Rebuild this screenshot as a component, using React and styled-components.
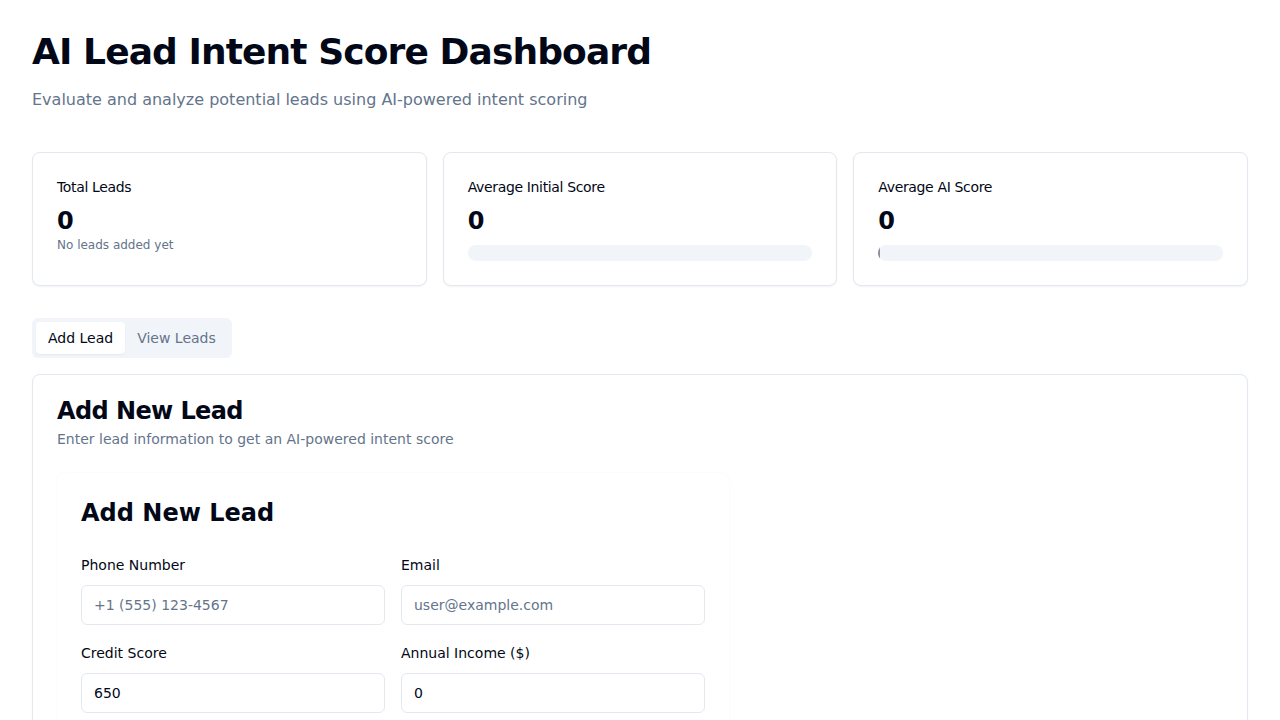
import React, { useState } from "react";
import styled, { createGlobalStyle } from "styled-components";

const GlobalStyle = createGlobalStyle`
  body {
    margin: 0;
    background: #ffffff;
    color: #020817;
    font-family: "DejaVu Sans", "Noto Sans", sans-serif;
  }
  * { box-sizing: border-box; }
`;

const Page = styled.div`
  padding: 32px;
`;

const Title = styled.h1`
  margin: 0;
  font-size: 36px;
  line-height: 40px;
  font-weight: 700;
  letter-spacing: -0.025em;
  color: #020817;
`;

const Subtitle = styled.p`
  margin: 16px 0 0;
  font-size: 16px;
  line-height: 24px;
  color: #64748b;
`;

const StatsGrid = styled.div`
  display: grid;
  grid-template-columns: repeat(3, 1fr);
  gap: 16px;
  margin-top: 40px;
`;

const Card = styled.div`
  background: #ffffff;
  border: 1px solid #e2e8f0;
  border-radius: 8px;
  box-shadow: 0 1px 2px 0 rgba(0, 0, 0, 0.05);
`;

const StatCard = styled(Card)`
  padding: 24px;
`;

const StatLabel = styled.div`
  font-size: 14px;
  line-height: 20px;
  letter-spacing: -0.025em;
  color: #020817;
`;

const StatValue = styled.div`
  margin-top: 8px;
  font-size: 24px;
  line-height: 32px;
  font-weight: 700;
`;

const StatNote = styled.div`
  font-size: 12px;
  line-height: 16px;
  color: #64748b;
`;

const Track = styled.div`
  margin-top: 8px;
  height: 16px;
  border-radius: 9999px;
  background: #f1f5f9;
  overflow: hidden;
`;

const Fill = styled.div`
  height: 100%;
  width: ${(p) => (p.$sliver ? "2px" : "0")};
  background: #0f172a;
  opacity: 0.45;
`;

const TabsList = styled.div`
  display: inline-flex;
  align-items: center;
  height: 40px;
  padding: 4px;
  margin-top: 32px;
  border-radius: 6px;
  background: #f1f5f9;
`;

const Tab = styled.button`
  border: 0;
  font-family: inherit;
  font-size: 14px;
  line-height: 20px;
  padding: 6px 12px;
  border-radius: 4px;
  cursor: pointer;
  background: ${(p) => (p.$active ? "#ffffff" : "transparent")};
  color: ${(p) => (p.$active ? "#020817" : "#64748b")};
  box-shadow: ${(p) => (p.$active ? "0 1px 2px 0 rgba(0,0,0,0.05)" : "none")};
`;

const MainCard = styled(Card)`
  margin-top: 16px;
`;

const CardHeader = styled.div`
  padding: 24px;
`;

const CardTitle = styled.h2`
  margin: 0;
  font-size: 24px;
  line-height: 24px;
  font-weight: 700;
  letter-spacing: -0.025em;
`;

const CardDesc = styled.p`
  margin: 6px 0 0;
  font-size: 14px;
  line-height: 20px;
  color: #64748b;
`;

const CardBody = styled.div`
  padding: 0 24px 24px;
`;

const FormCard = styled.div`
  max-width: 672px;
  padding: 24px;
  border-radius: 8px;
  background: #ffffff;
  box-shadow: 0 0 3px 0 rgba(0, 0, 0, 0.035);
`;

const FormTitle = styled.h3`
  margin: 0 0 26px;
  font-size: 24px;
  line-height: 32px;
  font-weight: 700;
`;

const FormGrid = styled.div`
  display: grid;
  grid-template-columns: 1fr 1fr;
  column-gap: 16px;
  row-gap: 18px;
`;

const Field = styled.div`
  display: flex;
  flex-direction: column;
`;

const Label = styled.label`
  font-size: 14px;
  line-height: 20px;
  margin-bottom: 10px;
  color: #020817;
`;

const Input = styled.input`
  height: 40px;
  padding: 0 12px;
  border: 1px solid #e2e8f0;
  border-radius: 6px;
  font-family: inherit;
  font-size: 14px;
  color: #020817;
  background: #ffffff;
  outline: none;

  &::placeholder {
    color: #64748b;
  }
`;

const SubmitButton = styled.button`
  margin-top: 24px;
  height: 40px;
  width: 100%;
  border: 0;
  border-radius: 6px;
  background: #0f172a;
  color: #f8fafc;
  font-family: inherit;
  font-size: 14px;
`;

const fields = [
  { label: "Phone Number", placeholder: "+1 (555) 123-4567", value: "" },
  { label: "Email", placeholder: "user@example.com", value: "" },
  { label: "Credit Score", placeholder: "", value: "650" },
  { label: "Annual Income ($)", placeholder: "", value: "0" },
  { label: "Loan Amount ($)", placeholder: "", value: "0" },
  { label: "Employment Years", placeholder: "", value: "0" },
];

export default function App() {
  const [tab, setTab] = useState("add");

  return (
    <>
      <GlobalStyle />
      <Page>
        <Title>AI Lead Intent Score Dashboard</Title>
        <Subtitle>Evaluate and analyze potential leads using AI-powered intent scoring</Subtitle>

        <StatsGrid>
          <StatCard>
            <StatLabel>Total Leads</StatLabel>
            <StatValue>0</StatValue>
            <StatNote>No leads added yet</StatNote>
          </StatCard>
          <StatCard>
            <StatLabel>Average Initial Score</StatLabel>
            <StatValue>0</StatValue>
            <Track>
              <Fill />
            </Track>
          </StatCard>
          <StatCard>
            <StatLabel>Average AI Score</StatLabel>
            <StatValue>0</StatValue>
            <Track>
              <Fill $sliver />
            </Track>
          </StatCard>
        </StatsGrid>

        <TabsList>
          <Tab $active={tab === "add"} onClick={() => setTab("add")}>Add Lead</Tab>
          <Tab $active={tab === "view"} onClick={() => setTab("view")}>View Leads</Tab>
        </TabsList>

        <MainCard>
          <CardHeader>
            <CardTitle>Add New Lead</CardTitle>
            <CardDesc>Enter lead information to get an AI-powered intent score</CardDesc>
          </CardHeader>
          <CardBody>
            <FormCard>
              <FormTitle>Add New Lead</FormTitle>
              <FormGrid>
                {fields.map((f) => (
                  <Field key={f.label}>
                    <Label>{f.label}</Label>
                    <Input placeholder={f.placeholder} defaultValue={f.value} />
                  </Field>
                ))}
              </FormGrid>
              <SubmitButton>Add Lead</SubmitButton>
            </FormCard>
          </CardBody>
        </MainCard>
      </Page>
    </>
  );
}
